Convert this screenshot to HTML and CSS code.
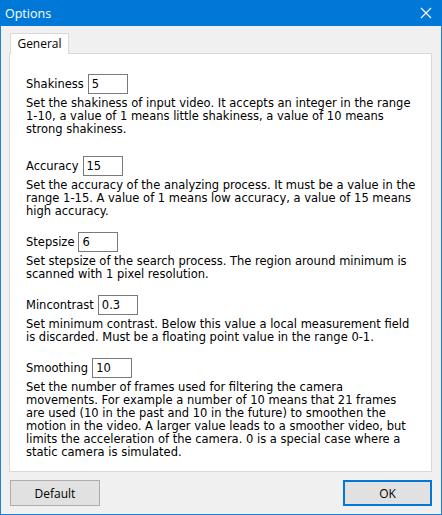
FILE: index.html
```html
<!DOCTYPE html>
<html lang="en">
<head>
  <meta charset="UTF-8" />
  <title>Options</title>
  <link rel="stylesheet" href="styles.css">
</head>
<body>
  <div class="window">
    <div class="titlebar">
      <span class="title">Options</span>
      <svg class="close" width="12" height="12" viewBox="0 0 12 12">
        <path d="M1 1 L11 11 M11 1 L1 11" stroke="#fff" stroke-width="1.1" fill="none" />
      </svg>
    </div>

    <div class="content">
      <div class="tabs">
        <div class="tab">General</div>
      </div>

      <div class="panel">
        <div class="option first">
          <div class="row"><label>Shakiness</label><input type="text" value="5" /></div>
          <p>Set the shakiness of input video. It accepts an integer in the range 1-10, a value of 1 means little shakiness, a value of 10 means strong shakiness.</p>
        </div>
        <div class="option">
          <div class="row"><label>Accuracy</label><input type="text" value="15" /></div>
          <p>Set the accuracy of the analyzing process. It must be a value in the range 1-15. A value of 1 means low accuracy, a value of 15 means high accuracy.</p>
        </div>
        <div class="option">
          <div class="row"><label>Stepsize</label><input type="text" value="6" /></div>
          <p>Set stepsize of the search process. The region around minimum is scanned with 1 pixel resolution.</p>
        </div>
        <div class="option">
          <div class="row"><label>Mincontrast</label><input type="text" value="0.3" /></div>
          <p>Set minimum contrast. Below this value a local measurement field is discarded. Must be a floating point value in the range 0-1.</p>
        </div>
        <div class="option">
          <div class="row"><label>Smoothing</label><input type="text" value="10" /></div>
          <p>Set the number of frames used for filtering the camera movements. For example a number of 10 means that 21 frames are used (10 in the past and 10 in the future) to smoothen the motion in the video. A larger value leads to a smoother video, but limits the acceleration of the camera. 0 is a special case where a static camera is simulated.</p>
        </div>
      </div>

      <div class="buttons">
        <button>Default</button>
        <button class="default">OK</button>
      </div>
    </div>
  </div>
</body>
</html>
```

FILE: styles.css
```css
body {
  margin: 0;
  font-family: "Open Sans", "Noto Sans", sans-serif;
}
.window {
  width: 442px;
  height: 515px;
  box-sizing: border-box;
  border: 1px solid #1a82d8;
  border-top: none;
  background-color: #f0f0f0;
  display: flex;
  flex-direction: column;
}
.titlebar {
  flex-shrink: 0;
  height: 26px;
  margin: 0 -1px;
  background-color: #0078d7;
  color: #fff;
  display: flex;
  align-items: center;
  justify-content: space-between;
  padding: 0 10px 0 5px;
}
.title {
  font-size: 12.5px;
}
.close {
  display: block;
}
.content {
  padding: 7px 9px 0 8px;
}
.tabs {
  display: flex;
  padding-left: 1px;
}
.tab {
  height: 20px;
  width: 57px;
  background-color: #fff;
  border: 1px solid #d9d9d9;
  border-bottom: none;
  font-size: 12px;
  color: #000;
  text-align: center;
  line-height: 20px;
  margin-bottom: -1px;
  position: relative;
}
.panel {
  height: 419px;
  box-sizing: border-box;
  background-color: #fff;
  border: 1px solid #d9d9d9;
  padding: 20px 13px 0 16px;
  font-family: "DejaVu Sans", Verdana, sans-serif;
  font-size: 11.5px;
  color: #000;
}
.option {
  margin-top: 14px;
}
.option.first {
  margin-top: 0;
  margin-bottom: 20px;
}
.option.first + .option {
  margin-top: 0;
}
.row {
  display: flex;
  align-items: center;
  gap: 4px;
}
.row input {
  width: 40px;
  height: 20px;
  box-sizing: border-box;
  border: 1px solid #7a7a7a;
  font-family: inherit;
  font-size: 11.5px;
  padding: 0 3px;
  margin: 0;
}
.option p {
  margin: 3px 0 0 0;
  line-height: 13px;
}
.buttons {
  display: flex;
  justify-content: space-between;
  margin-top: 8px;
  padding-left: 1px;
}
.buttons button {
  width: 90px;
  height: 26px;
  background-color: #e1e1e1;
  border: 1px solid #adadad;
  font-family: "Open Sans", "Noto Sans", sans-serif;
  font-size: 12px;
  color: #000;
  padding: 0;
}
.buttons button.default {
  width: 89px;
  border: 2px solid #0078d7;
}
```
